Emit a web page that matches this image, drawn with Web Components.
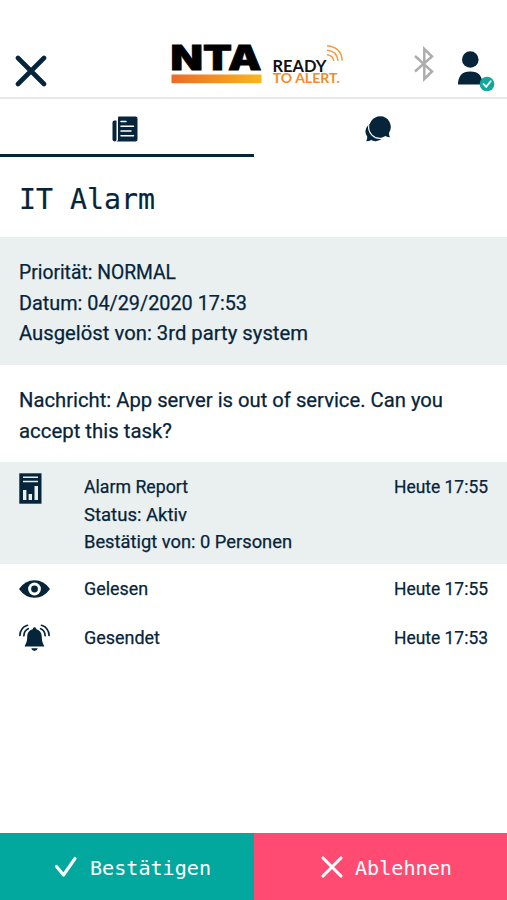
<!DOCTYPE html>
<html lang="de">
<head>
<meta charset="utf-8">
<title>IT Alarm</title>
<style>
html,body{margin:0;height:100%;background:#fff}
body{font-family:Roboto,"Liberation Sans",sans-serif;color:#06243a}
</style>
</head>
<body>
<alarm-app></alarm-app>
<script>
const define = (name, html, setup) => customElements.define(name, class extends HTMLElement {
  connectedCallback() {
    if (!this.shadowRoot) this.attachShadow({mode: 'open'}).innerHTML = html;
    if (setup) setup(this, this.shadowRoot);
  }
});

// One line of text, condensed or widened to the width given in pixels.
define('fit-line', `<style>
:host{display:block;white-space:nowrap;overflow:visible}
span{display:inline-block;transform-origin:0 50%}
</style><span><slot></slot></span>`, (el, root) => {
  const span = root.querySelector('span');
  const want = parseFloat(el.getAttribute('w'));
  el.style.width = want + 'px';
  const have = span.getBoundingClientRect().width;
  if (have) span.style.transform = `scaleX(${want / have})`;
});

const icons = {
  close: [32, 32, '<path d="M3 3 29 29M29 3 3 29" stroke="currentColor" stroke-width="4.6" stroke-linecap="round"/>'],
  bluetooth: [22, 36, '<path d="M2 10 19 25.500 11.300 33V3L19 10.500 2 25.500" fill="none" stroke="#adadad" stroke-width="2.500"/>'],
  user: [38, 42, '<circle cx="13.300" cy="9.500" r="8.300" fill="currentColor"/><path d="M1 34.500C1 26 5 21.500 13.300 21.500S25.500 26 25.500 34.500Z" fill="currentColor"/><circle cx="30" cy="34" r="7.300" fill="#12a79d"/><path d="m26.500 34 2.700 2.800 4.500-5.500" fill="none" stroke="#fff" stroke-width="1.800" stroke-linecap="round"/>'],
  news: [26, 26, '<path d="M7 .5H23.500Q25.500 .5 25.500 2.500V23.500Q25.500 25.500 23.500 25.500H4.500Q6 25 6 23V1.500Q6 .5 7 .5Z" fill="currentColor"/><path d="M2.500 4.500H4.500V23.500Q4.500 25.500 2.700 25.500T.5 23.500V6.500Q.5 4.500 2.500 4.500Z" fill="currentColor"/><path d="M9 5.500h5M9 10.200h12.500M9 15h10M9 19.800h12.500" stroke="#fff" stroke-width="1.500" stroke-linecap="round"/>'],
  chat: [26, 26, '<path d="M10 7A8.500 8.500 0 0 0 2.200 20.500Q2.400 23 1.200 25.300 4.500 25.300 6.200 24A9.500 9.500 0 0 0 17.500 22Z" fill="currentColor"/><path d="M15 .3A10.600 10.600 0 1 0 20.500 20Q22.300 21.200 25 21.200 23.700 19 24 16.700A10.600 10.600 0 0 0 15 .3Z" fill="currentColor"/><path d="M3.900 8.500A11.400 11.400 0 0 0 17.500 22.100" fill="none" stroke="#fff" stroke-width="1.100"/>'],
  report: [23, 31, '<path d="M.3.300H22.500V30.700H.3Z" fill="currentColor"/><path d="M4 4.300H19M4 8.600H19" stroke="#eaeff0" stroke-width="1.500"/><path d="M4 17H7.400V27H4ZM9.600 21H13V27H9.600ZM15.500 13H19V27H15.500Z" fill="#eaeff0"/>'],
  eye: [31, 18, '<path d="M0 9Q6 .3 15.500 .3T31 9Q25 17.700 15.500 17.700T0 9Z" fill="currentColor"/><circle cx="15.500" cy="9" r="6.400" fill="#fff"/><circle cx="15.500" cy="9" r="3.400" fill="currentColor"/>'],
  bell: [32, 28, '<path d="M15.500 3.200Q17.300 3.200 17.300 5.300C21.500 6.300 22.700 9.500 22.800 13C22.900 18 23.900 19 25.400 22.500H5.600C7.100 19 8.100 18 8.200 13C8.300 9.500 9.500 6.300 13.700 5.300Q13.700 3.200 15.500 3.200ZM12.200 24.300H18.800Q18.100 27 15.500 27T12.200 24.300Z" fill="currentColor"/><path d="M.9 11.500Q1.300 3.500 8.500 1.300M4.900 11.700Q5 6.500 9.300 4.700M30.100 11.500Q29.700 3.500 22.500 1.300M26.100 11.700Q26 6.500 21.700 4.700" fill="none" stroke="currentColor" stroke-width="1.700" stroke-linecap="round"/>'],
  check: [24, 22, '<path d="m2.500 10.500 7 8.500L21 2.500" fill="none" stroke="#fff" stroke-width="3.100" stroke-linecap="round" stroke-linejoin="round"/>'],
  cross: [24, 24, '<path d="M3 3 21 21M21 3 3 21" stroke="#fff" stroke-width="3.100" stroke-linecap="round"/>']
};
define('app-icon', '<style>:host{display:block;flex:none}svg{display:block}</style><div></div>', (el, root) => {
  const [w, h, body] = icons[el.getAttribute('name')];
  root.querySelector('div').innerHTML = `<svg width="${w}" height="${h}" viewBox="0 0 ${w} ${h}">${body}</svg>`;
});

define('brand-logo', `<style>:host{display:block}svg{display:block}</style>
<svg width="176" height="64" viewBox="170 30 176 64">
<defs><linearGradient id="g"><stop stop-color="#ee6a27"/><stop offset="1" stop-color="#fbb71a"/></linearGradient></defs>
<text x="170.500" y="69.500" font-family="Inter" font-weight="900" font-size="33.500" fill="#000" stroke="#000" stroke-width=".8" textLength="91" lengthAdjust="spacingAndGlyphs">NTA</text>
<rect x="171.500" y="74.500" width="90" height="8.700" fill="url(#g)"/>
<text x="272.500" y="71.500" font-family="Lato" font-weight="700" font-size="16.300" fill="#111" textLength="54" lengthAdjust="spacingAndGlyphs">READY</text>
<text x="272.800" y="83.200" font-family="Lato" font-weight="700" font-size="12.500" fill="#f28c28" textLength="67" lengthAdjust="spacingAndGlyphs">TO ALERT.</text>
<path d="M327 45.800Q341 47 342.300 60.500M327 50.300Q337 51 338 60.800M327 54.800Q333 55.500 333.800 61" fill="none" stroke="#f29a45" stroke-width="1.500"/>
</svg>`);

define('app-header', `<style>
:host{display:flex;box-sizing:border-box;height:99px;border-bottom:2px solid #e6e8e9;align-items:flex-start;padding:0 12px 0 15px}
.close{margin-top:55px}.logo{margin:30px 0 0 123px}.bt{margin:46px 0 0 67px}.user{margin:50px 0 0 auto}
</style><app-icon class="close" name="close"></app-icon><brand-logo class="logo"></brand-logo><app-icon class="bt" name="bluetooth"></app-icon><app-icon class="user" name="user"></app-icon>`);

define('app-tabs', `<style>
:host{display:grid;grid-template-columns:254px 1fr;height:58px}
div{box-sizing:border-box;display:flex;justify-content:center;padding-top:17px;border-bottom:3px solid transparent}
.on{border-color:#06243a;padding-right:4px}.off{padding-right:5px}
</style><div class="on"><app-icon name="news"></app-icon></div><div class="off"><app-icon name="chat"></app-icon></div>`);

define('info-block', `<style>
:host{display:block;box-sizing:border-box;font-size:20.700px;line-height:30.700px;-webkit-text-stroke:.25px}
:host([shade]){background:#eaeff0}
</style><slot></slot>`);

define('log-entry', `<style>
:host{display:grid;grid-template-columns:65px 1fr auto;box-sizing:border-box;padding:0 19px;font-size:18.500px;line-height:27.700px;-webkit-text-stroke:.25px}
:host([shade]){background:#eaeff0}
</style><slot name="icon"></slot><div><slot></slot></div><slot name="time"></slot>`);

define('action-button', `<style>
:host{display:flex;align-items:center;font:20.100px/28px "DejaVu Sans Mono",monospace;color:#fff}
</style><slot></slot>`);

define('alarm-app', `<style>
:host{display:flex;flex-direction:column;width:507px;height:900px;overflow:hidden;color:#06243a}
h1{margin:0;height:80px;box-sizing:border-box;padding:23px 0 0 19px;font:400 28.300px/40px "DejaVu Sans Mono",monospace;-webkit-text-stroke:.2px}
.meta{height:128px;padding:20px 19px 0}
.msg{height:97px;padding:20px 19px 0}
.report{height:102px;padding-top:12px}
.report app-icon{margin-top:-1px}
.read{height:49px;padding-top:12px}
.sent{height:49px;padding-top:12px}
footer{margin-top:auto;display:grid;grid-template-columns:254px 1fr;height:67px}
footer fit-line{padding-top:2px}
.ok{background:#02a89e;padding-left:54px;gap:12px}
.no{background:#ff4b72;padding-left:66px;gap:11px}
</style>
<app-header></app-header><app-tabs></app-tabs>
<h1><fit-line w="136">IT Alarm</fit-line></h1>
<info-block class="meta" shade><fit-line w="157">Priorität: NORMAL</fit-line><fit-line w="228">Datum: 04/29/2020 17:53</fit-line><fit-line w="289">Ausgelöst von: 3rd party system</fit-line></info-block>
<info-block class="msg"><fit-line w="424">Nachricht: App server is out of service. Can you</fit-line><fit-line w="153">accept this task?</fit-line></info-block>
<log-entry class="report" shade><app-icon slot="icon" name="report"></app-icon><fit-line w="104">Alarm Report</fit-line><fit-line w="103">Status: Aktiv</fit-line><fit-line w="208">Bestätigt von: 0 Personen</fit-line><fit-line slot="time" w="94">Heute 17:55</fit-line></log-entry>
<log-entry class="read"><app-icon slot="icon" name="eye" style="margin-top:4px"></app-icon><fit-line w="64">Gelesen</fit-line><fit-line slot="time" w="94">Heute 17:55</fit-line></log-entry>
<log-entry class="sent"><app-icon slot="icon" name="bell" style="margin-top:-1px"></app-icon><fit-line w="76">Gesendet</fit-line><fit-line slot="time" w="94">Heute 17:53</fit-line></log-entry>
<footer><action-button class="ok"><app-icon name="check"></app-icon><fit-line w="121">Bestätigen</fit-line></action-button><action-button class="no"><app-icon name="cross"></app-icon><fit-line w="97">Ablehnen</fit-line></action-button></footer>`);
</script>
</body>
</html>
